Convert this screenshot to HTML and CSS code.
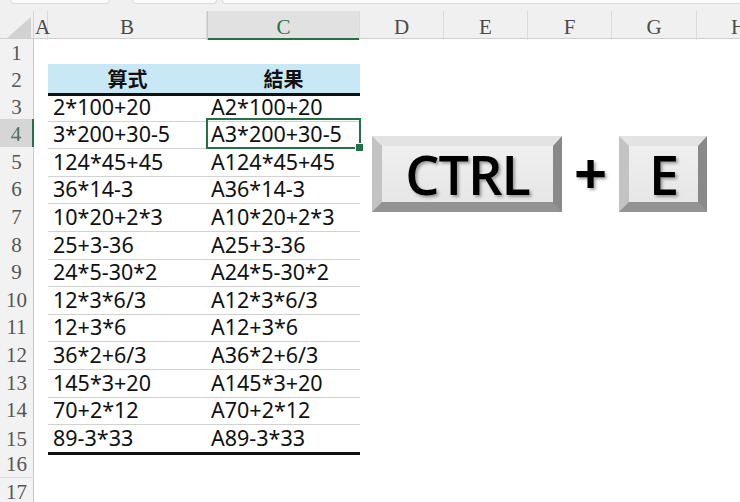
FILE: index.html
```html
<!DOCTYPE html>
<html lang="zh-Hant">
<head>
<meta charset="utf-8">
<title>CTRL + E</title>
<link rel="stylesheet" href="styles.css">
</head>
<body>
<div class="app">
  <div class="topbar">
    <div class="tab t1"></div>
    <div class="tab t2"></div>
    <div class="tab t3"></div>
  </div>
  <div class="colheads">
    <div class="corner"><div class="tri"></div></div>
    <div class="ch cha">A</div>
    <div class="ch">B</div>
    <div class="ch sel">C</div>
    <div class="ch">D</div>
    <div class="ch">E</div>
    <div class="ch">F</div>
    <div class="ch">G</div>
    <div class="ch">H</div>
  </div>
  <div class="sheet">
    <div class="row r1"><div class="rh">1</div><div class="c"></div><div class="c"></div><div class="c"></div><div class="c"></div></div>
    <div class="row"><div class="rh">2</div><div class="c"></div><div class="c t th">算式</div><div class="c t th">結果</div><div class="c"></div></div>
    <div class="row"><div class="rh">3</div><div class="c"></div><div class="c t b">2*100+20</div><div class="c t cc">A2*100+20</div><div class="c"></div></div>
    <div class="row"><div class="rh rsel">4</div><div class="c"></div><div class="c t b">3*200+30-5</div><div class="c t cc active">A3*200+30-5</div><div class="c"></div></div>
    <div class="row"><div class="rh">5</div><div class="c"></div><div class="c t b">124*45+45</div><div class="c t cc">A124*45+45</div><div class="c"></div></div>
    <div class="row"><div class="rh">6</div><div class="c"></div><div class="c t b">36*14-3</div><div class="c t cc">A36*14-3</div><div class="c"></div></div>
    <div class="row"><div class="rh">7</div><div class="c"></div><div class="c t b">10*20+2*3</div><div class="c t cc">A10*20+2*3</div><div class="c"></div></div>
    <div class="row"><div class="rh">8</div><div class="c"></div><div class="c t b">25+3-36</div><div class="c t cc">A25+3-36</div><div class="c"></div></div>
    <div class="row"><div class="rh">9</div><div class="c"></div><div class="c t b">24*5-30*2</div><div class="c t cc">A24*5-30*2</div><div class="c"></div></div>
    <div class="row"><div class="rh">10</div><div class="c"></div><div class="c t b">12*3*6/3</div><div class="c t cc">A12*3*6/3</div><div class="c"></div></div>
    <div class="row"><div class="rh">11</div><div class="c"></div><div class="c t b">12+3*6</div><div class="c t cc">A12+3*6</div><div class="c"></div></div>
    <div class="row"><div class="rh">12</div><div class="c"></div><div class="c t b">36*2+6/3</div><div class="c t cc">A36*2+6/3</div><div class="c"></div></div>
    <div class="row"><div class="rh">13</div><div class="c"></div><div class="c t b">145*3+20</div><div class="c t cc">A145*3+20</div><div class="c"></div></div>
    <div class="row"><div class="rh">14</div><div class="c"></div><div class="c t b">70+2*12</div><div class="c t cc">A70+2*12</div><div class="c"></div></div>
    <div class="row"><div class="rh">15</div><div class="c"></div><div class="c t b last">89-3*33</div><div class="c t cc last">A89-3*33</div><div class="c"></div></div>
    <div class="row"><div class="rh">16</div><div class="c"></div><div class="c"></div><div class="c"></div><div class="c"></div></div>
    <div class="row"><div class="rh">17</div><div class="c"></div><div class="c"></div><div class="c"></div><div class="c"></div></div>
  </div>
  <div class="keys">
    <div class="key ctrl"><span>CTRL</span></div>
    <div class="plus">+</div>
    <div class="key ekey"><span>E</span></div>
  </div>
</div>
</body>
</html>
```

FILE: styles.css
```css
* { box-sizing: border-box; }
html, body { margin: 0; padding: 0; }
body {
  width: 740px;
  height: 502px;
  overflow: hidden;
  background: #ffffff;
  font-family: "Noto Sans", "Noto Sans CJK TC", sans-serif;
}
.app {
  position: relative;
  width: 740px;
  height: 502px;
  overflow: hidden;
}

/* top strip */
.topbar {
  height: 11px;
  background: #f0f0f0;
  display: flex;
  align-items: flex-start;
}
.tab {
  height: 4px;
  background: #fbfbfb;
  border: 1px solid #dcdcdc;
  border-top: none;
  border-radius: 0 0 6px 6px;
}
.t1 { margin-left: 10px; width: 100px; }
.t2 { margin-left: 22px; width: 85px; }
.t3 { margin-left: 5px; flex: 1; border-radius: 0 0 0 6px; border-right: none; }

/* column headers */
.colheads {
  height: 28px;
  display: grid;
  grid-template-columns: 34px 14px 159px 153px 84px 84px 84px 85px 84px;
  background: #f0f0f0;
  border-bottom: 1px solid #cfcfcf;
}
.corner {
  display: flex;
  align-items: flex-end;
  justify-content: flex-end;
  padding: 0 2px 2px 0;
  border-right: 1px solid #d4d4d4;
}
.tri {
  width: 0;
  height: 0;
  border-left: 24px solid transparent;
  border-bottom: 21px solid #d2d2d2;
}
.ch {
  font-family: "Liberation Serif", "Times New Roman", serif;
  font-size: 21px;
  color: #4a4a4a;
  display: flex;
  align-items: center;
  justify-content: center;
  padding-top: 4px;
  border-right: 1px solid #dadada;
  white-space: nowrap;
  overflow: visible;
}
.ch.cha {
  justify-content: flex-start;
  padding-left: 1px;
}
.ch.sel {
  background: #e1e1e1;
  color: #217346;
  border-left: 1px solid #c8c8c8;
  box-shadow: inset 0 -2px 0 #217346;
}

/* sheet rows */
.row {
  height: 27.6px;
  display: grid;
  grid-template-columns: 34px 14px 159px 153px 1fr;
}
.row.r1 { height: 25px; }
.rh {
  font-family: "Liberation Serif", "Times New Roman", serif;
  font-size: 21px;
  color: #555555;
  background: #f2f2f2;
  border-right: 1px solid #c9c9c9;
  border-bottom: 1px solid #dedede;
  display: flex;
  align-items: center;
  justify-content: center;
  padding-top: 2px;
}
.rh.rsel {
  background: #d6d6d6;
  color: #4f6f60;
  border-right: 2px solid #217346;
}
.c { position: relative; }
.t {
  display: flex;
  align-items: center;
  font-size: 21.5px;
  color: #111111;
  white-space: nowrap;
  border-bottom: 1px solid #d2d2d2;
}
.t.b { padding-left: 5px; }
.t.cc { padding-left: 4px; }
.t.th {
  background: #c8e8f6;
  justify-content: center;
  font-family: "Noto Sans CJK TC", "Noto Sans", sans-serif;
  font-weight: 700;
  font-size: 20px;
  border-bottom: 3px solid #111111;
}
.t.last { border-bottom: 3px solid #111111; }

.active::after {
  content: "";
  position: absolute;
  left: -1px;
  top: -1px;
  right: -1px;
  bottom: -1px;
  border: 2px solid #217346;
}
.active::before {
  content: "";
  position: absolute;
  right: -4px;
  bottom: -4px;
  width: 7px;
  height: 7px;
  background: #217346;
  border: 1px solid #ffffff;
  z-index: 2;
}

/* keyboard overlay */
.keys {
  position: absolute;
  left: 372px;
  top: 136px;
  display: flex;
  align-items: center;
}
.key {
  height: 76px;
  border-style: solid;
  border-width: 10px 9px 10px 10px;
  border-color: #e3e3e3 #898989 #939393 #c3c3c3;
  background: linear-gradient(#efefef, #e6e6e6);
  display: flex;
  align-items: center;
  justify-content: center;
  font-family: "Open Sans", "Noto Sans", sans-serif;
  font-weight: 600;
  font-size: 54px;
  line-height: 1;
  color: #000000;
  text-shadow: 2px 2px 3px rgba(0, 0, 0, 0.35);
}
.key span { letter-spacing: -1px; }
.ctrl { width: 190px; }
.ekey { width: 88px; }
.plus {
  width: 57px;
  text-align: center;
  font-family: "Noto Sans", "Open Sans", sans-serif;
  font-weight: 700;
  font-size: 58px;
  line-height: 1;
  color: #000000;
  text-shadow: 2px 2px 3px rgba(0, 0, 0, 0.35);
  padding-bottom: 4px;
}
```
